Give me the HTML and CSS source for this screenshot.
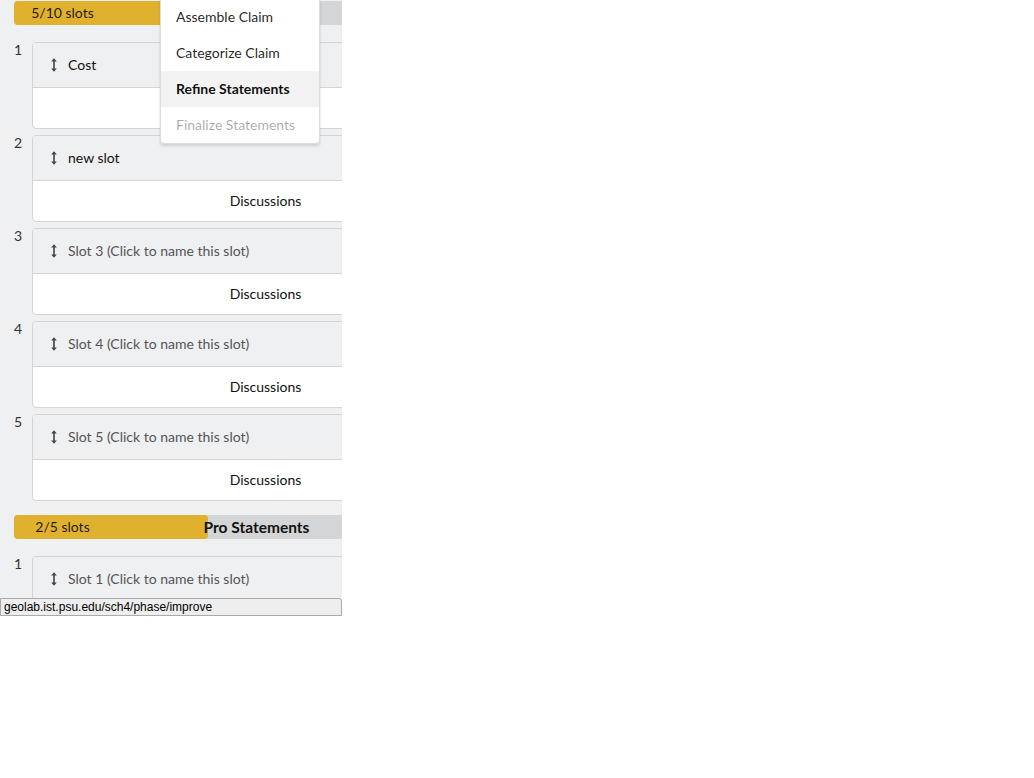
FILE: index.html
```html
<!DOCTYPE html>
<html>
<head>
<meta charset="utf-8">
<link rel="stylesheet" href="styles.css">
</head>
<body>
<div class="frame">
  <div class="column">
    <div class="progress">
      <div class="fill" style="width:50%"></div>
      <div class="count">5/10 slots</div>
    </div>
    <div class="slots">
      <div class="slot">
        <div class="num">1</div>
        <div class="card">
          <div class="card-head"><svg class="grip" width="6" height="14" viewBox="0 0 6 14"><path d="M3 1.5V12.5" stroke="#444" stroke-width="1.6" fill="none"/><path d="M0.2 3.4L3 0.2L5.8 3.4Z" fill="#444"/><path d="M0.2 10.6L3 13.8L5.8 10.6Z" fill="#444"/></svg><span class="name">Cost</span></div>
          <div class="card-body"><span>Discussions</span></div>
        </div>
      </div>
      <div class="slot">
        <div class="num">2</div>
        <div class="card">
          <div class="card-head"><svg class="grip" width="6" height="14" viewBox="0 0 6 14"><path d="M3 1.5V12.5" stroke="#444" stroke-width="1.6" fill="none"/><path d="M0.2 3.4L3 0.2L5.8 3.4Z" fill="#444"/><path d="M0.2 10.6L3 13.8L5.8 10.6Z" fill="#444"/></svg><span class="name">new slot</span></div>
          <div class="card-body"><span>Discussions</span></div>
        </div>
      </div>
      <div class="slot">
        <div class="num">3</div>
        <div class="card">
          <div class="card-head"><svg class="grip" width="6" height="14" viewBox="0 0 6 14"><path d="M3 1.5V12.5" stroke="#444" stroke-width="1.6" fill="none"/><path d="M0.2 3.4L3 0.2L5.8 3.4Z" fill="#444"/><path d="M0.2 10.6L3 13.8L5.8 10.6Z" fill="#444"/></svg><span class="name placeholder">Slot 3 (Click to name this slot)</span></div>
          <div class="card-body"><span>Discussions</span></div>
        </div>
      </div>
      <div class="slot">
        <div class="num">4</div>
        <div class="card">
          <div class="card-head"><svg class="grip" width="6" height="14" viewBox="0 0 6 14"><path d="M3 1.5V12.5" stroke="#444" stroke-width="1.6" fill="none"/><path d="M0.2 3.4L3 0.2L5.8 3.4Z" fill="#444"/><path d="M0.2 10.6L3 13.8L5.8 10.6Z" fill="#444"/></svg><span class="name placeholder">Slot 4 (Click to name this slot)</span></div>
          <div class="card-body"><span>Discussions</span></div>
        </div>
      </div>
      <div class="slot">
        <div class="num">5</div>
        <div class="card">
          <div class="card-head"><svg class="grip" width="6" height="14" viewBox="0 0 6 14"><path d="M3 1.5V12.5" stroke="#444" stroke-width="1.6" fill="none"/><path d="M0.2 3.4L3 0.2L5.8 3.4Z" fill="#444"/><path d="M0.2 10.6L3 13.8L5.8 10.6Z" fill="#444"/></svg><span class="name placeholder">Slot 5 (Click to name this slot)</span></div>
          <div class="card-body"><span>Discussions</span></div>
        </div>
      </div>
    </div>
    <div class="progress second">
      <div class="fill" style="width:40%"></div>
      <div class="count">2/5 slots</div>
      <div class="title">Pro Statements</div>
    </div>
    <div class="slots">
      <div class="slot">
        <div class="num">1</div>
        <div class="card">
          <div class="card-head"><svg class="grip" width="6" height="14" viewBox="0 0 6 14"><path d="M3 1.5V12.5" stroke="#444" stroke-width="1.6" fill="none"/><path d="M0.2 3.4L3 0.2L5.8 3.4Z" fill="#444"/><path d="M0.2 10.6L3 13.8L5.8 10.6Z" fill="#444"/></svg><span class="name placeholder">Slot 1 (Click to name this slot)</span></div>
        </div>
      </div>
    </div>
  </div>

  <div class="menu">
    <div class="item">Assemble Claim</div>
    <div class="item">Categorize Claim</div>
    <div class="item active">Refine Statements</div>
    <div class="item disabled">Finalize Statements</div>
  </div>

  <div class="status">geolab.ist.psu.edu/sch4/phase/improve</div>
</div>
</body>
</html>
```

FILE: styles.css
```css
html, body {
  margin: 0;
  padding: 0;
  background: #ffffff;
}

.frame {
  position: relative;
  width: 342px;
  height: 616px;
  overflow: hidden;
  background: #eff0f2;
  font-family: Lato, "Open Sans", sans-serif;
  font-size: 14px;
  color: rgba(0, 0, 0, 0.87);
}

.column {
  width: 485px;
  padding-left: 14px;
}

.progress {
  display: grid;
  height: 24px;
  margin-top: 1px;
  background: #d4d5d7;
  border-radius: 4px;
  line-height: 24px;
}

.progress.second {
  margin-top: 14px;
}

.progress > * {
  grid-area: 1 / 1;
}

.fill {
  background: #e0b12f;
  border-radius: 4px;
}

.count {
  width: 20%;
  text-align: center;
  color: rgba(0, 0, 0, 0.87);
}

.title {
  justify-self: center;
  font-weight: 700;
  font-size: 15.5px;
  color: #111;
}

.slots {
  display: flex;
  flex-direction: column;
  gap: 6px;
  margin-top: 17px;
}

.slot {
  display: flex;
}

.num {
  width: 18px;
  flex: none;
  line-height: 14px;
  padding-top: 1px;
  color: #333;
}

.card {
  width: 465px;
  flex: none;
  border: 1px solid #d4d4d5;
  border-radius: 4px;
  background: #ffffff;
  overflow: hidden;
}

.card-head {
  display: flex;
  align-items: center;
  gap: 11px;
  height: 42px;
  padding-bottom: 2px;
  padding-left: 18px;
  background: #eff0f2;
  border-bottom: 1px solid #d4d4d5;
}

.grip {
  display: block;
  flex: none;
  margin-top: 2px;
}

.name {
  color: #111;
}

.name.placeholder {
  color: #555;
}

.card-body {
  display: flex;
  align-items: center;
  justify-content: center;
  height: 38px;
  padding-bottom: 2px;
  color: #111;
}

.menu {
  position: absolute;
  left: 160px;
  top: -1px;
  width: 158px;
  background: #ffffff;
  border: 1px solid rgba(34, 36, 38, 0.15);
  border-top: none;
  border-radius: 0 0 4px 4px;
  box-shadow: 0 2px 3px 0 rgba(34, 36, 38, 0.15);
}

.item {
  height: 36px;
  line-height: 36px;
  padding-left: 15px;
  color: rgba(0, 0, 0, 0.87);
}

.item.active {
  background: #f3f3f3;
  font-weight: 700;
  color: rgba(0, 0, 0, 0.95);
}

.item.disabled {
  color: rgba(0, 0, 0, 0.35);
}

.status {
  position: absolute;
  left: 0;
  top: 598px;
  width: 337px;
  height: 16px;
  padding-left: 3px;
  background: #eeeeee;
  border: 1px solid #aaaaaa;
  border-top-right-radius: 3px;
  font-family: "Liberation Sans", Arial, sans-serif;
  font-size: 12px;
  line-height: 16px;
  color: #000;
}
```
